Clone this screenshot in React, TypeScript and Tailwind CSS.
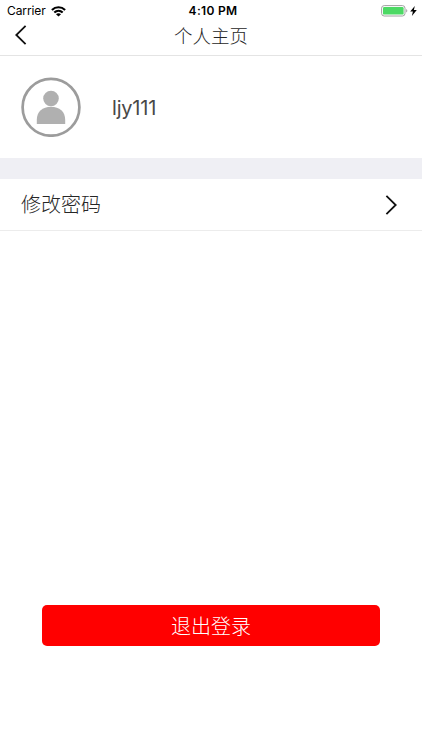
import React from "react";
import clsx from "clsx";

const WifiIcon: React.FC = () => (
  <svg width="15" height="11" viewBox="0 0 15 11" fill="none" stroke="#000" strokeWidth="2.1">
    <path d="M0.9 4C4.6 0.3 10.4 0.3 14.1 4" />
    <path d="M3.3 6.6C5.7 4.3 9.3 4.3 11.7 6.6" />
    <path d="M7.5 10.6L5 8.3C6.4 7 8.6 7 10 8.3Z" fill="#000" stroke="none" />
  </svg>
);

const BatteryIcon: React.FC = () => (
  <svg width="27" height="12" viewBox="0 0 27 12">
    <rect x="0.6" y="0.6" width="23.4" height="10.4" rx="2.6" fill="#fff" stroke="#a0a0a0" />
    <rect x="2" y="2" width="20.6" height="7.6" rx="1.2" fill="#4cd964" />
    <path d="M25.2 4C26.7 4.6 26.7 7 25.2 7.6Z" fill="#a0a0a0" />
  </svg>
);

const BoltIcon: React.FC = () => (
  <svg width="7" height="10" viewBox="0 0 7 10">
    <path d="M4.8 0L0.2 5.6H2.9L1.9 10L6.8 4.1H3.9Z" fill="#000" />
  </svg>
);

const Chevron: React.FC<{ direction: "left" | "right" }> = ({ direction }) => (
  <svg
    width="12"
    height="20"
    viewBox="0 0 12 20"
    fill="none"
    stroke="#111"
    strokeWidth="1.8"
    className={clsx(direction === "right" && "rotate-180")}
  >
    <path d="M10.6 0.9L1.3 10L10.6 19.1" />
  </svg>
);

const Avatar: React.FC = () => (
  <svg width="60" height="60" viewBox="0 0 60 60">
    <circle cx="30" cy="30.3" r="28.4" fill="#fff" stroke="#9c9c9c" strokeWidth="2.7" />
    <circle cx="30" cy="21.5" r="7.8" fill="#b0b0b0" />
    <path d="M15.8 47V42.8C15.8 34.8 21.5 29.8 30 29.8S44.2 34.8 44.2 42.8V47Z" fill="#b0b0b0" />
  </svg>
);

const StatusBar: React.FC = () => (
  <div className="grid h-[22px] grid-cols-3 items-center pr-[5px] pl-[7px] font-['Inter',sans-serif] font-normal text-black">
    <div className="flex items-center gap-[5px]">
      <span className="text-[12px] tracking-[-0.1px]">Carrier</span>
      <WifiIcon />
    </div>
    <span className="pl-0.5 text-center text-[12px] font-semibold tracking-[0.3px]">4:10 PM</span>
    <div className="flex items-center justify-end gap-[2px]">
      <BatteryIcon />
      <BoltIcon />
    </div>
  </div>
);

const App: React.FC = () => (
  <div className="flex h-screen w-full flex-col bg-white font-['Inter','Noto_Sans_CJK_SC',sans-serif] font-light text-[#262626]">
    <StatusBar />

    <header className="grid h-[34px] shrink-0 grid-cols-[40px_1fr_40px] items-center border-b border-[#e4e4e4]">
      <button aria-label="返回" className="pb-[7px] pl-[15px]">
        <Chevron direction="left" />
      </button>
      <h1 className="pb-[5px] text-center text-[18.5px] leading-[26px]">个人主页</h1>
    </header>

    <section className="flex h-[102px] shrink-0 items-center gap-[31px] pl-[21px]">
      <Avatar />
      <span className="pt-0.5 text-[20px] leading-[25px] font-normal tracking-[-0.2px] text-[#484848]">
        ljy111
      </span>
    </section>

    <div className="h-[21px] shrink-0 bg-[#efeff4]" />

    <button className="flex h-[52px] shrink-0 items-center justify-between border-b border-[#ececec] pr-[25px] pl-[21px]">
      <span className="pt-px text-[20px]">修改密码</span>
      <Chevron direction="right" />
    </button>

    <button className="mx-[42px] mt-auto mb-[104px] h-[41px] rounded-[5px] bg-[#ff0000] pt-0.5 text-[20px] text-white">
      退出登录
    </button>
  </div>
);

export default App;
